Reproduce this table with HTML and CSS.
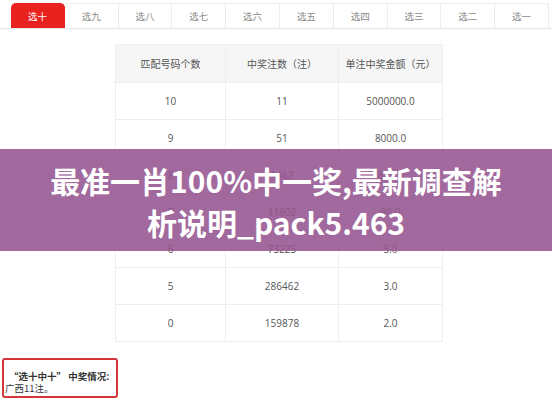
FILE: index.html
```html
<!DOCTYPE html>
<html lang="zh-CN">
  <head>
    <meta charset="UTF-8" />
    <meta name="viewport" content="width=device-width, initial-scale=1.0" />
    <title>选十中奖情况</title>
    <link rel="stylesheet" href="styles.css">
  </head>
  <body>
    <div class="page">
      <!-- Tabs -->
      <div class="tabs">
        <div class="tab active">选十</div>
        <div class="tab">选九</div>
        <div class="tab">选八</div>
        <div class="tab">选七</div>
        <div class="tab">选六</div>
        <div class="tab">选五</div>
        <div class="tab">选四</div>
        <div class="tab">选三</div>
        <div class="tab">选二</div>
        <div class="tab">选一</div>
      </div>

      <!-- Prize table -->
      <table class="prize-table">
        <thead>
          <tr>
            <th>匹配号码个数</th>
            <th>中奖注数（注）</th>
            <th>单注中奖金额（元）</th>
          </tr>
        </thead>
        <tbody>
          <tr><td>10</td><td>11</td><td>5000000.0</td></tr>
          <tr><td>9</td><td>51</td><td>8000.0</td></tr>
          <tr><td>8</td><td>1467</td><td>800.0</td></tr>
          <tr><td>7</td><td>11802</td><td>80.0</td></tr>
          <tr><td>6</td><td>73225</td><td>5.0</td></tr>
          <tr><td>5</td><td>286462</td><td>3.0</td></tr>
          <tr><td>0</td><td>159878</td><td>2.0</td></tr>
        </tbody>
      </table>

      <!-- Result note -->
      <div class="note">
        <div class="note-title">“选十中十” 中奖情况:</div>
        <div>广西11注。</div>
      </div>

      <!-- Title banner over the table -->
      <div class="banner">最准一肖100%中一奖,最新调查解<br>析说明_pack5.463</div>
    </div>
  </body>
</html>
```

FILE: styles.css
```css
body {
  margin: 0;
  background: #fff;
  font-family: "Open Sans", "Noto Sans CJK SC", sans-serif;
  color: #555;
}
.page {
  position: relative;
  width: 552px;
  height: 400px;
  overflow: hidden;
}
.tabs {
  display: grid;
  grid-template-columns: repeat(10, 1fr);
  margin-top: 3px;
  padding: 0 3px 0 11px;
  border-bottom: 1px solid #e6e6e6;
}
.tab {
  height: 24px;
  line-height: 24px;
  text-align: center;
  font-size: 9.5px;
  color: #888;
  border-top: 1px solid #f0f0f0;
  border-right: 1px solid #ececec;
  font-family: "Noto Sans CJK SC", sans-serif;
}
.tab.active {
  background: #e8231f;
  color: #fff;
  border-color: #e8231f;
  border-radius: 5px 5px 0 0;
}
.prize-table {
  margin: 15px 0 0 115px;
  width: 328px;
  border-collapse: collapse;
  font-size: 10px;
  color: #555;
}
.prize-table th,
.prize-table td {
  border: 1px solid #eeeeee;
  text-align: center;
  font-weight: normal;
  padding: 0;
}
.prize-table th {
  height: 37px;
  background: #f6f6f6;
  font-family: "Noto Sans CJK SC", sans-serif;
}
.prize-table td {
  height: 36px;
}
.prize-table th:nth-child(1) { width: 109px; }
.prize-table th:nth-child(2) { width: 112px; }
.note {
  margin: 16px 0 0 2px;
  width: 110px;
  height: 26px;
  padding: 10px 1px 0;
  border: 2px solid #d2383a;
  border-radius: 3px;
  font-family: "Noto Sans CJK SC", sans-serif;
  font-size: 9.5px;
  line-height: 12px;
  color: #333;
  white-space: nowrap;
}
.note-title {
  font-weight: bold;
  padding-left: 4px;
}
.banner {
  position: absolute;
  left: 0;
  right: 0;
  top: 149px;
  height: 102px;
  box-sizing: border-box;
  padding-top: 10px;
  background: rgba(148, 84, 143, 0.88);
  color: #fff;
  text-align: center;
  font-family: "Noto Sans CJK SC", sans-serif;
  font-weight: bold;
  font-size: 30px;
  line-height: 42px;
}
```
